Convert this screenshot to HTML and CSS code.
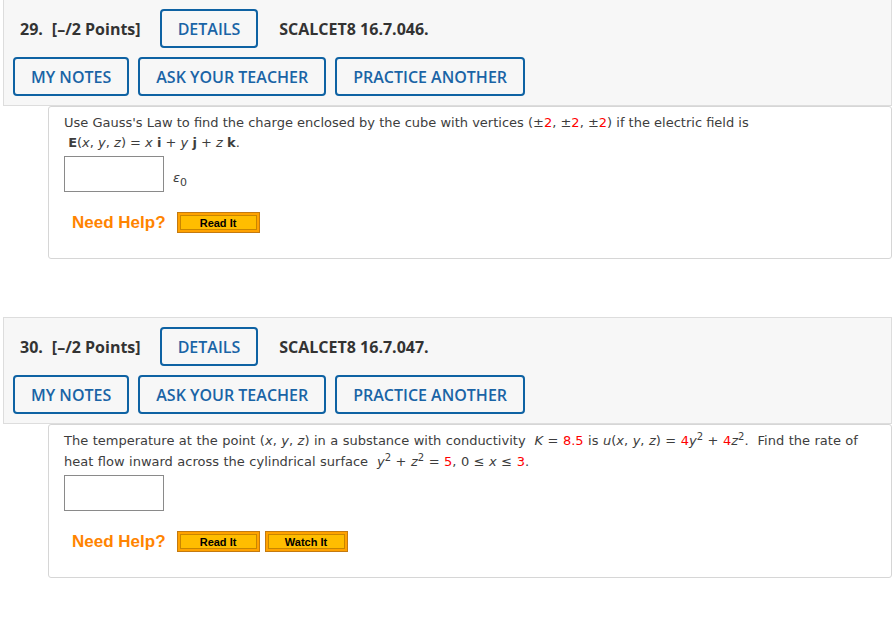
FILE: index.html
```html
<!DOCTYPE html>
<html>
<head>
<meta charset="utf-8">
<link rel="stylesheet" href="styles.css">
</head>
<body>
<div class="page">
  <div class="question first">
    <div class="qhead">
      <div class="row1">
        <span class="num">29.</span>
        <span class="pts">[–/2 Points]</span>
        <span class="btn details">DETAILS</span>
        <span class="code">SCALCET8 16.7.046.</span>
      </div>
      <div class="row2">
        <span class="btn">MY NOTES</span>
        <span class="btn">ASK YOUR TEACHER</span>
        <span class="btn">PRACTICE ANOTHER</span>
      </div>
    </div>
    <div class="qbody">
      <div class="qtext">Use Gauss's Law to find the charge enclosed by the cube with vertices (±<span class="red">2</span>, ±<span class="red">2</span>, ±<span class="red">2</span>) if the electric field is<br>
      &nbsp;<b>E</b>(<i>x</i>, <i>y</i>, <i>z</i>) = <i>x</i> <b>i</b> + <i>y</i> <b>j</b> + <i>z</i> <b>k</b>.</div>
      <div class="answer">
        <span class="inputbox"></span>
        <span class="unit"><i>ε</i><sub>0</sub></span>
      </div>
      <div class="help">
        <span class="needhelp">Need Help?</span>
        <span class="hbtn"><span class="hin">Read It</span></span>
      </div>
    </div>
  </div>

  <div class="question second">
    <div class="qhead">
      <div class="row1">
        <span class="num">30.</span>
        <span class="pts">[–/2 Points]</span>
        <span class="btn details">DETAILS</span>
        <span class="code">SCALCET8 16.7.047.</span>
      </div>
      <div class="row2">
        <span class="btn">MY NOTES</span>
        <span class="btn">ASK YOUR TEACHER</span>
        <span class="btn">PRACTICE ANOTHER</span>
      </div>
    </div>
    <div class="qbody body2">
      <div class="qtext">The temperature at the point (<i>x</i>, <i>y</i>, <i>z</i>) in a substance with conductivity &nbsp;<i>K</i> = <span class="red">8.5</span> is <i>u</i>(<i>x</i>, <i>y</i>, <i>z</i>) = <span class="red">4</span><i>y</i><sup>2</sup> + <span class="red">4</span><i>z</i><sup>2</sup>. &nbsp;Find the rate of<br>
      heat flow inward across the cylindrical surface &nbsp;<i>y</i><sup>2</sup> + <i>z</i><sup>2</sup> = <span class="red">5</span>, 0 ≤ <i>x</i> ≤ <span class="red">3</span>.</div>
      <div class="answer">
        <span class="inputbox"></span>
      </div>
      <div class="help">
        <span class="needhelp">Need Help?</span>
        <span class="hbtn"><span class="hin">Read It</span></span>
        <span class="hbtn"><span class="hin">Watch It</span></span>
      </div>
    </div>
  </div>
</div>
</body>
</html>
```

FILE: styles.css
```css
html, body {
  margin: 0;
  padding: 0;
  background: #ffffff;
}

.page {
  padding-left: 3px;
  width: 889px;
}

.question.first {
  margin-top: -1px;
}

.question.second {
  margin-top: 58px;
}

.qhead {
  background: #f7f7f7;
  border: 1px solid #dddddd;
  padding: 9px 9px 9px 9px;
  font-family: "Open Sans", "Liberation Sans", sans-serif;
}

.row1 {
  display: flex;
  align-items: center;
  padding-left: 7px;
  color: #333333;
  font-weight: 700;
  font-size: 16px;
}

.pts {
  margin-left: 9px;
}

.details {
  margin-left: 19px;
}

.code {
  margin-left: 21px;
}

.row2 {
  display: flex;
  gap: 9px;
  margin-top: 9px;
}

.btn {
  display: inline-flex;
  align-items: center;
  justify-content: center;
  box-sizing: border-box;
  height: 39px;
  padding: 0 16px;
  border: 2px solid #0e62a3;
  border-radius: 4px;
  color: #1a64a6;
  font-family: "Open Sans", "Liberation Sans", sans-serif;
  font-weight: 600;
  font-size: 16px;
  background: #f7f7f7;
}

.qbody {
  margin-left: 45px;
  border: 1px solid #d6d6d6;
  border-radius: 3px;
  background: #ffffff;
  padding: 6px 15px 25px 15px;
  font-family: "DejaVu Sans", Verdana, sans-serif;
  font-size: 13px;
  color: #3d3d3d;
}

.qtext {
  line-height: 20px;
}

.body2 {
  padding-top: 5px;
}

.body2 .qtext {
  line-height: 21px;
  word-spacing: 0.35px;
}

.qtext sup {
  font-size: 10px;
  line-height: 0;
}

.red {
  color: #ff0000;
}

.answer {
  display: flex;
  align-items: center;
  margin-top: 3px;
}

.inputbox {
  display: block;
  box-sizing: border-box;
  width: 100px;
  height: 36px;
  border: 1px solid #8a8a8a;
  background: #ffffff;
}

.unit {
  margin-left: 9px;
  margin-top: 6px;
  font-size: 13px;
}

.unit sub {
  font-size: 11px;
  line-height: 0;
}

.help {
  display: flex;
  align-items: center;
  margin-top: 20px;
  padding-left: 8px;
  gap: 5px;
}

.needhelp {
  font-family: Arial, "Liberation Sans", sans-serif;
  font-weight: 700;
  font-size: 17px;
  color: #ff8400;
  margin-right: 6px;
}

.hbtn {
  display: inline-block;
  box-sizing: border-box;
  width: 83px;
  height: 21px;
  border: 1px solid #c47a10;
  background: #ffa200;
  padding: 2px;
}

.hin {
  display: flex;
  align-items: center;
  justify-content: center;
  box-sizing: border-box;
  height: 15px;
  border: 1px solid #c98600;
  background: #ffbd00;
  font-family: Arial, "Liberation Sans", sans-serif;
  font-weight: 700;
  font-size: 11px;
  color: #000000;
}
```
